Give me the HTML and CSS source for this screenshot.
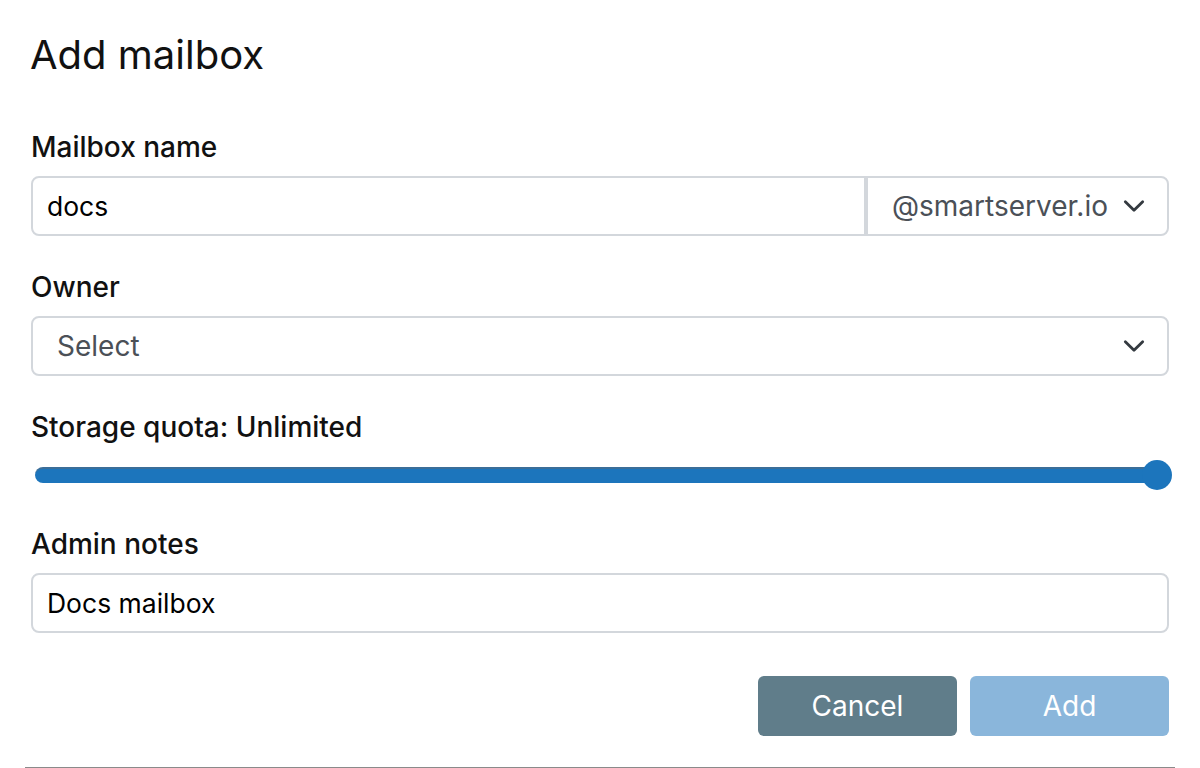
FILE: index.html
```html
<!DOCTYPE html>
<html>
<head>
<meta charset="utf-8">
<link rel="stylesheet" href="styles.css">
</head>
<body>
<div class="modal">
  <h1 class="title">Add mailbox</h1>
  <div class="field first">
    <div class="label">Mailbox name</div>
    <div class="group">
      <div class="input grow left">docs</div>
      <div class="select domain right">
        <span class="sel-text">@smartserver.io</span>
        <svg class="chev" viewBox="0 0 24 24" width="26" height="26"><path d="M4 8l8 8 8-8" fill="none" stroke="#343a40" stroke-width="2.6" stroke-linecap="round" stroke-linejoin="round"/></svg>
      </div>
    </div>
  </div>
  <div class="field">
    <div class="label">Owner</div>
    <div class="select full">
      <span class="sel-text">Select</span>
      <svg class="chev" viewBox="0 0 24 24" width="26" height="26"><path d="M4 8l8 8 8-8" fill="none" stroke="#343a40" stroke-width="2.6" stroke-linecap="round" stroke-linejoin="round"/></svg>
    </div>
  </div>
  <div class="field">
    <div class="label">Storage quota: Unlimited</div>
    <div class="slider">
      <div class="track"></div>
      <div class="thumb"></div>
    </div>
  </div>
  <div class="field">
    <div class="label">Admin notes</div>
    <div class="input">Docs mailbox</div>
  </div>
  <div class="actions">
    <button class="btn cancel">Cancel</button>
    <button class="btn add">Add</button>
  </div>
  <div class="rule"></div>
</div>
</body>
</html>
```
FILE: styles.css
```css
html, body {
  margin: 0;
  padding: 0;
  background: #ffffff;
}
body {
  font-family: Inter, "Noto Sans", sans-serif;
  color: #111111;
}
.modal {
  width: 1150px;
  margin: 0 auto;
  padding-top: 30px;
  display: flex;
  flex-direction: column;
}
.title {
  margin: 0 6px 0 5px;
  font-size: 40px;
  font-weight: 400;
  line-height: 50px;
}
.field {
  margin: 0 6px;
  display: flex;
  flex-direction: column;
}
.first {
  margin-top: 49px;
}
.label {
  font-size: 28px;
  line-height: 36px;
  font-weight: 500;
  margin-bottom: 11px;
}
.group {
  display: flex;
  margin-bottom: 33px;
}
.input {
  height: 60px;
  box-sizing: border-box;
  border: 2px solid #d3d7dc;
  border-radius: 8px;
  padding: 0 14px;
  font-size: 26.5px;
  display: flex;
  align-items: center;
  color: #000;
}
.grow { flex: 1; }
.left {
  border-top-right-radius: 0;
  border-bottom-right-radius: 0;
  border-right-width: 2px;
}
.select {
  height: 60px;
  box-sizing: border-box;
  border: 2px solid #d3d7dc;
  border-radius: 8px;
  display: flex;
  align-items: center;
  font-size: 28px;
  color: #4b5057;
}
.full {
  padding: 0 20px 0 24px;
  margin-bottom: 33px;
}
.right {
  border-top-left-radius: 0;
  border-bottom-left-radius: 0;
  border-left-width: 2px;
  width: 303px;
  padding: 0 20px 0 24px;
}
.sel-text {
  flex: 1;
}
.chev {
  display: block;
}
.slider {
  position: relative;
  height: 32px;
  margin: 3px 0 35px;
}
.track {
  position: absolute;
  left: 4px;
  right: 10px;
  top: 8px;
  height: 16px;
  box-sizing: border-box;
  border-radius: 8px;
  background: #1c75bc;
  border-top: 2px solid #3b6e99;
}
.thumb {
  position: absolute;
  right: -3px;
  top: 1px;
  width: 30px;
  height: 30px;
  border-radius: 50%;
  background: #1c75bc;
}
.actions {
  display: flex;
  justify-content: flex-end;
  gap: 13px;
  margin: 43px 6px 0;
}
.btn {
  width: 199px;
  height: 60px;
  border: none;
  border-radius: 6px;
  font-family: Inter, "Noto Sans", sans-serif;
  font-size: 28px;
  color: #ffffff;
  padding: 0;
}
.cancel { background: #607d8a; }
.add { background: #8ab6db; }
.rule {
  margin-top: 31px;
  height: 1px;
  flex: none;
  background: #8a8a8a;
}
```
